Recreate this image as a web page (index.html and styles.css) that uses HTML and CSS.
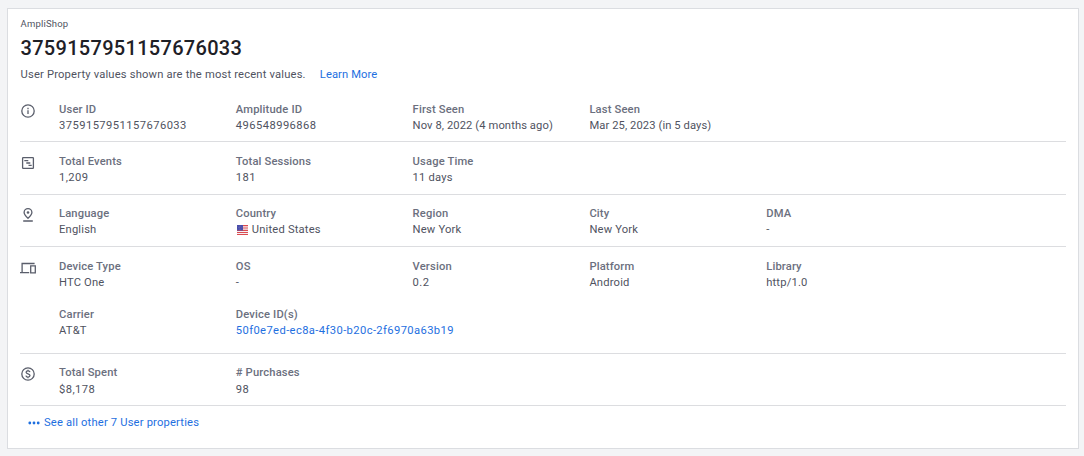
FILE: index.html
```html
<!DOCTYPE html>
<html lang="en">
<head>
<meta charset="utf-8">
<title>User 3759157951157676033</title>
<link rel="stylesheet" href="styles.css">
</head>
<body>
<main class="card">
  <header class="head">
    <div class="project">AmpliShop</div>
    <h1 class="title">3759157951157676033</h1>
    <p class="note"><span>User Property values shown are the most recent values.</span><a class="link learn">Learn More</a></p>
  </header>

  <section class="section">
    <svg class="icon" viewBox="0 0 16 16"><circle cx="8" cy="8" r="6.2"/><path d="M8 7.3v3.7"/><path d="M8 4.8v1.4"/></svg>
    <dl class="grid">
      <div class="item"><dt>User ID</dt><dd class="num">3759157951157676033</dd></div>
      <div class="item"><dt>Amplitude ID</dt><dd class="num">496548996868</dd></div>
      <div class="item"><dt>First Seen</dt><dd class="date">Nov 8, 2022 (4 months ago)</dd></div>
      <div class="item"><dt>Last Seen</dt><dd class="date">Mar 25, 2023 (in 5 days)</dd></div>
    </dl>
  </section>

  <section class="section tall">
    <svg class="icon" viewBox="0 0 16 16"><rect x="2.6" y="2.6" width="10.8" height="10.8" rx=".6"/><path d="M4.3 5.6h4M6.3 8h4M8.5 10.4h3.2"/></svg>
    <dl class="grid">
      <div class="item"><dt>Total Events</dt><dd class="num">1,209</dd></div>
      <div class="item"><dt>Total Sessions</dt><dd class="num">181</dd></div>
      <div class="item"><dt>Usage Time</dt><dd>11 days</dd></div>
    </dl>
  </section>

  <section class="section place">
    <svg class="icon" viewBox="0 0 16 16"><path d="M8 11.3C5.4 8.8 4.1 7.3 4.1 5.5a3.9 3.9 0 0 1 7.8 0c0 1.8-1.3 3.3-3.9 5.8zM3.2 14h9.6"/><circle class="solid" cx="8" cy="5.5" r="1.3"/></svg>
    <dl class="grid">
      <div class="item"><dt>Language</dt><dd>English</dd></div>
      <div class="item"><dt>Country</dt><dd class="country"><svg class="flag" viewBox="0 0 11 10"><path fill="#f4f0f3" d="M0 0h11v10H0z"/><path fill="#dc4b50" d="M0 0h11v1.200H0zM0 2.500h11v1.100H0zM0 4.800h11V6H0zM0 7h11v1H0zM0 9h11v1H0z"/><path fill="#4649a8" d="M0 0h6v5.500H0z"/><path stroke="#9a9cd5" stroke-width=".5" stroke-dasharray=".6 .8" d="M.6 1.200h5M1 2.700h4.500M.6 4.200h5"/></svg>United States</dd></div>
      <div class="item"><dt>Region</dt><dd>New York</dd></div>
      <div class="item"><dt>City</dt><dd>New York</dd></div>
      <div class="item"><dt>DMA</dt><dd>-</dd></div>
    </dl>
  </section>

  <section class="section device">
    <svg class="icon" viewBox="0 0 16 16"><path d="M2.100 12V3.500h12.500M0 12.600h9.200M10.700 5.800h4.600v7h-4.600z"/></svg>
    <dl class="grid">
      <div class="item"><dt>Device Type</dt><dd>HTC One</dd></div>
      <div class="item"><dt>OS</dt><dd>-</dd></div>
      <div class="item"><dt>Version</dt><dd class="num">0.2</dd></div>
      <div class="item"><dt>Platform</dt><dd>Android</dd></div>
      <div class="item"><dt>Library</dt><dd>http/1.0</dd></div>
      <div class="item"><dt>Carrier</dt><dd>AT&amp;T</dd></div>
      <div class="item"><dt>Device ID(s)</dt><dd class="device-id"><a class="link">50f0e7ed-ec8a-4f30-b20c-2f6970a63b19</a></dd></div>
    </dl>
  </section>

  <section class="section spend">
    <svg class="icon" viewBox="0 0 16 16"><circle cx="8" cy="8" r="6.2"/><path d="M10 6.2C9.8 5.3 9 4.9 8 4.9c-1.100 0-1.900.5-1.900 1.400 0 2.200 3.900 1.100 3.900 3.300 0 .9-.8 1.500-2 1.500-1.100 0-1.900-.5-2.100-1.400M8 3.700v1.200M8 11v1.300"/></svg>
    <dl class="grid">
      <div class="item"><dt>Total Spent</dt><dd class="num">$8,178</dd></div>
      <div class="item"><dt># Purchases</dt><dd class="num">98</dd></div>
    </dl>
  </section>

  <a class="link more"><svg class="dots" viewBox="0 0 12 4"><circle cx="1.800" cy="2" r="1.400"/><circle cx="6" cy="2" r="1.400"/><circle cx="10.200" cy="2" r="1.400"/></svg>See all other 7 User properties</a>
</main>
</body>
</html>
```

FILE: styles.css
```css
* { box-sizing: border-box; }
body {
  margin: 0;
  padding: 8px 5px 7px 7px;
  height: 456px;
  background: #f3f4f6;
  font: 11.2px/16px Roboto, "Liberation Sans", sans-serif;
  letter-spacing: .18px;
  color: #50535f;
}
.card {
  height: 441px;
  padding: 0 12px;
  background: #fff;
  border: 1px solid #dbdde1;
}
.head { height: 81px; padding: 8px 0 0 .5px; }
.project { font-size: 9.5px; line-height: 14px; letter-spacing: .2px; }
.title {
  margin: 4px 0 0;
  font-size: 20px;
  line-height: 26px;
  font-weight: 500;
  letter-spacing: .3px;
  color: #1e2026;
}
.note { display: flex; gap: 14px; margin: 6px 0 0; }
.learn { letter-spacing: .1px; }
.link { color: #1e6fdf; text-decoration: none; }
.section {
  display: flex;
  height: 52px;
  padding-top: 12px;
  border-bottom: 1px solid #dcdde0;
}
.icon {
  width: 16px;
  height: 16px;
  margin: 1px 23px 0 0;
  flex: none;
  fill: none;
  stroke: #5a5e6b;
  stroke-width: 1.3;
}
.icon .solid { fill: #5a5e6b; stroke: none; }
.grid {
  display: grid;
  grid-template-columns: repeat(5, 176.8px);
  align-content: start;
  row-gap: 16px;
  margin: 0;
}
dt { font-weight: 500; letter-spacing: .15px; color: #6b6f7e; }
dd { margin: 0; white-space: nowrap; }
.num { letter-spacing: .44px; }
.date { letter-spacing: .09px; }
.device-id { letter-spacing: .39px; }
.tall { height: 53px; }
.place { padding-top: 11px; }
.device { height: 107px; }
.spend { padding-top: 11px; }
.spend dd { padding-top: 1px; }
.country { display: flex; align-items: center; }
.flag { width: 11px; height: 10px; margin: 0 4px 0 1px; }
.more { display: flex; align-items: center; margin: 9px 0 0 8px; }
.dots { width: 12px; height: 4px; margin-right: 4px; fill: currentColor; }
```
